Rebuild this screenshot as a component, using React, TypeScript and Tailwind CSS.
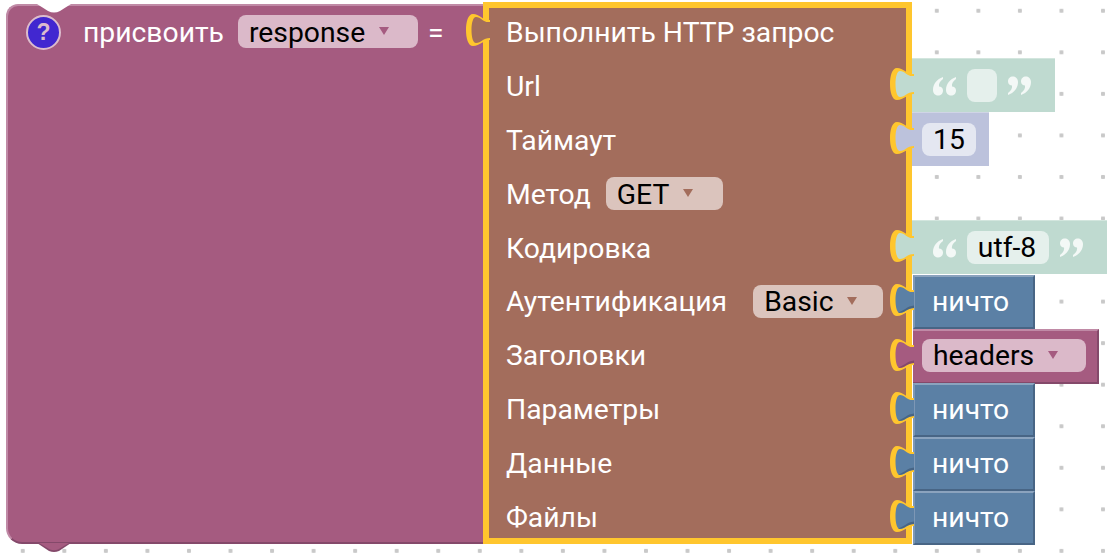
const rows = ['Url', 'Таймаут']

function Arrow({ color, className }: { color: string; className?: string }) {
  return (
    <svg width="10" height="8" viewBox="0 0 10 8" className={className}>
      <path d="M0 0 H10 L5 8 Z" fill={color} />
    </svg>
  )
}

function Dropdown({ label, width, bg, arrow, textClass }: { label: string; width: string; bg: string; arrow: string; textClass: string }) {
  return (
    <div className={`mb-px flex h-[33px] shrink-0 items-center rounded-lg pl-[11px] text-black ${width} ${bg}`}>
      <span className={textClass}>{label}</span>
      <Arrow color={arrow} className="ml-[14px] -translate-y-px" />
    </div>
  )
}

function Tab({ fill, shade, place }: { fill: string; shade?: string; place: string }) {
  return (
    <svg width="24" height="32" viewBox="0 0 24 32" className={`absolute overflow-visible ${place}`}>
      <path d="M24 6 C17 7 14 0 7 0 C2 0 0 8 0 16 C0 24 2 32 7 32 C14 32 17 26 24 26 Z" fill="#ffc62e" />
      <path d="M24 8 C17 9 15 3 10 3 C7 3 5.5 9 5.5 16 C5.5 23 7 29 10 29 C15 29 17 24 24 24 Z" fill={fill} />
      {shade && <path d="M8 28.5 C14 30 17 24 24 24 L24 21.5 C17 22 14 27 8 28.5 Z" fill={shade} />}
    </svg>
  )
}

function Quote({ flip }: { flip?: boolean }) {
  const mark = 'M11 1 C5 3 1 8 1 14 C1 17 3 19.5 6 19.5 C9 19.5 11 17.5 11 14.5 C11 12 9 10.5 7 10.5 C6.5 8 8 5 11 3 Z'
  return (
    <svg width="25" height="20" viewBox="0 0 25 20" className={`shrink-0 ${flip ? 'rotate-180' : ''}`}>
      <path d={mark} fill="#f3f8f6" />
      <path d={mark} fill="#f3f8f6" transform="translate(13 0)" />
    </svg>
  )
}

function StringBlock({ value, width, fieldWidth }: { value: string; width: string; fieldWidth: string }) {
  return (
    <div className={`relative mb-[2px] flex h-[54px] shrink-0 items-center border-t border-t-[#d3e6de] bg-[#bfdad0] pl-[20px] ${width}`}>
      <Tab fill="#bfdad0" place="top-[9px] -left-[22px]" />
      <Quote />
      <div className={`mx-[10px] flex h-[33px] shrink-0 items-center justify-center rounded-lg bg-[#e5f0ec] pt-[2px] pr-[2px] text-black ${fieldWidth}`}>
        {value}
      </div>
      <Quote flip />
    </div>
  )
}

function NullBlock() {
  return (
    <div className="relative ml-px flex h-[54px] w-[122px] shrink-0 items-center border-t-2 border-r-2 border-b-2 border-l-2 border-t-[#8ba3be] border-r-[#486585] border-b-[#486585] border-l-[#7d97b5] bg-[#5b80a5] pl-[17px] text-white">
      <Tab fill="#5b80a5" shade="#486585" place="top-[7px] -left-[25px]" />
      ничто
    </div>
  )
}

function Label({ text, low }: { text: string; low?: boolean }) {
  return <span className={`text-white ${low ? 'pt-[2px]' : ''}`}>{text}</span>
}

const rowClass = 'flex h-[54px] items-center'
const slotClass = 'flex w-[406px] shrink-0 items-center'

export default function App() {
  return (
    <div className="flex h-[554px] w-full overflow-hidden bg-white bg-[radial-gradient(circle,#c9c9c9_2px,transparent_2.5px)] bg-[size:41.55px_41.55px] bg-[position:2px_-10px] font-[Roboto,sans-serif] text-[28.3px] leading-none">
      <div className="relative mt-[4px] ml-[6px] h-[540px] w-[477px] shrink-0 rounded-tl-[12px] rounded-bl-[16px] border-t-2 border-b-2 border-l-2 border-t-[#c08aa6] border-b-[#84496a] border-l-[#c08aa6] bg-[#a55b80]">
        <svg width="34" height="10" viewBox="0 0 34 10" className="absolute -top-[2px] left-[29px]">
          <path d="M0 0 L11 7 Q17 10 23 7 L34 0 Z" fill="#ffffff" />
        </svg>
        <svg width="34" height="9" viewBox="0 0 34 9" className="absolute -bottom-[10px] left-[29px]">
          <path d="M0 0 L12 8 Q17 10 22 8 L34 0 Z" fill="#84496a" />
          <path d="M2 0 L13 6.5 Q17 8 21 6.5 L32 0 Z" fill="#a55b80" />
        </svg>
        <div className="flex h-[54px] items-center pb-[2px] pl-[18px]">
          <div className="flex h-[35px] w-[35px] shrink-0 items-center justify-center rounded-full border-2 border-[#dcbccd] bg-[#4127d0] font-['Liberation_Sans',sans-serif] text-[23px] font-bold text-[#dcbccd]">
            ?
          </div>
          <span className="ml-[22px] pt-[2px] text-white">присвоить</span>
          <Dropdown label="response" width="ml-[14px] w-[180px]" bg="bg-[#dbb9c9]" arrow="#a55b80" textClass="pt-[3px]" />
          <span className="ml-[10px] pt-[2px] text-white">=</span>
        </div>
      </div>

      <div className="relative mt-[2px] h-[542px] w-[429px] shrink-0 border-[6px] border-[#ffc62e] bg-[#a36d5c]">
        <Tab fill="#a36d5c" place="top-[6px] -left-[23px]" />
        <div className="-mt-[3px] flex flex-col pl-[17px]">
          <div className={rowClass}>
            <Label text="Выполнить HTTP запрос" low />
          </div>
          <div className={rowClass}>
            <div className={slotClass}>
              <Label text={rows[0]} low />
            </div>
            <StringBlock value="" width="w-[143px]" fieldWidth="w-[30px]" />
          </div>
          <div className={rowClass}>
            <div className={slotClass}>
              <Label text={rows[1]} low />
            </div>
            <div className="relative mb-[2px] flex h-[54px] w-[77px] shrink-0 items-center border-t border-t-[#d0d5e6] bg-[#bcc2dc] pl-[10px]">
              <Tab fill="#bcc2dc" place="top-[9px] -left-[22px]" />
              <div className="flex h-[33px] w-[54px] items-center justify-center rounded-lg bg-[#e4e7f1] pt-[2px] text-black">15</div>
            </div>
          </div>
          <div className={rowClass}>
            <Label text="Метод" low />
            <Dropdown label="GET" width="ml-[15px] w-[117px]" bg="bg-[#dbc4bd]" arrow="#a36d5c" textClass="pt-[3px]" />
          </div>
          <div className={rowClass}>
            <div className={slotClass}>
              <Label text="Кодировка" low />
            </div>
            <StringBlock value="utf-8" width="w-[195px]" fieldWidth="w-[82px]" />
          </div>
          <div className={rowClass}>
            <div className={slotClass}>
              <Label text="Аутентификация" />
              <Dropdown label="Basic" width="ml-[26px] w-[130px]" bg="bg-[#dbc4bd]" arrow="#a36d5c" textClass="pt-px" />
            </div>
            <NullBlock />
          </div>
          <div className={rowClass}>
            <div className={slotClass}>
              <Label text="Заголовки" />
            </div>
            <div className="relative ml-px flex h-[55px] w-[186px] shrink-0 items-center border-t-2 border-r-2 border-b-2 border-t-[#c08aa6] border-r-[#84496a] border-b-[#84496a] bg-[#a55b80] pl-[9px]">
              <Tab fill="#a55b80" shade="#84496a" place="top-[8px] -left-[23px]" />
              <Dropdown label="headers" width="w-[164px]" bg="bg-[#dbb9c9]" arrow="#a55b80" textClass="pt-px" />
            </div>
          </div>
          {['Параметры', 'Данные', 'Файлы'].map((name) => (
            <div key={name} className={rowClass}>
              <div className={slotClass}>
                <Label text={name} />
              </div>
              <NullBlock />
            </div>
          ))}
        </div>
      </div>
    </div>
  )
}
